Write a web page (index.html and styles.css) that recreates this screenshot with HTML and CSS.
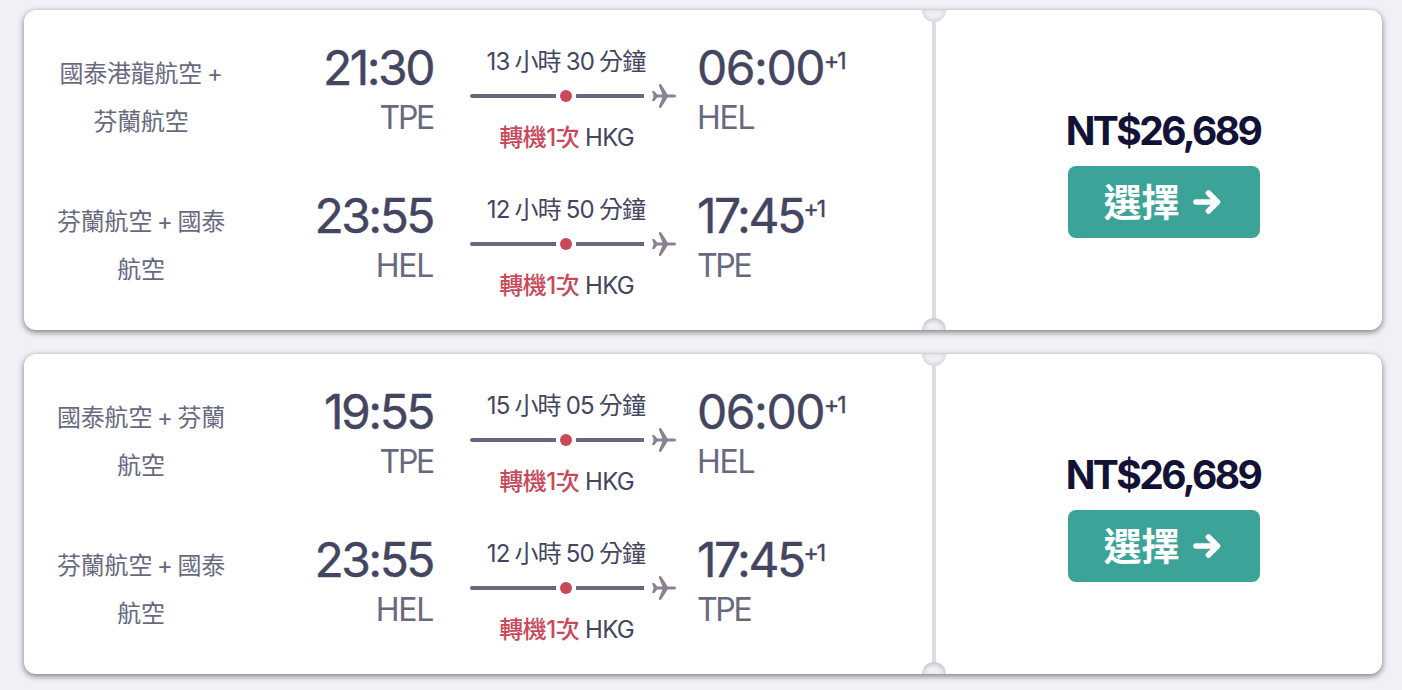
FILE: index.html
```html
<!DOCTYPE html>
<html lang="zh-Hant">
<head>
    <meta charset="UTF-8">
    <meta name="viewport" content="width=device-width, initial-scale=1.0">
    <title>航班搜尋結果</title>
    <link rel="stylesheet" href="styles.css">
</head>
<body>
    <svg class="sprite" width="0" height="0">
        <symbol id="plane" viewBox="0 0 24 24">
            <path d="M0 7H1.6Q2.3 7 2.8 7.6L5.2 10.5H10.4L6.9 1.7Q6.3 0 8 0Q8.9 0 9.4 0.8L15.6 10.5H22.5Q24 10.5 24 12T22.5 13.5H15.6L9.4 23.2Q8.9 24 8 24Q6.3 24 6.9 22.3L10.4 13.5H5.2L2.8 16.4Q2.3 17 1.6 17H0L1.6 12Z"/>
        </symbol>
        <symbol id="arrow" viewBox="0 0 28 26">
            <path d="M3 13H24M15.5 4L24.5 13L15.5 22" fill="none" stroke="#fff" stroke-width="5.6" stroke-linecap="round" stroke-linejoin="round"/>
        </symbol>
    </svg>

    <div class="ticket">
        <div class="legs">
            <div class="leg">
                <div class="airline">國泰港龍航空 +<br>芬蘭航空</div>
                <div class="depart">
                    <div class="time">21:30</div>
                    <div class="code tpe">TPE</div>
                </div>
                <div class="route">
                    <div class="duration">13 小時 30 分鐘</div>
                    <div class="track"><span class="line"></span><span class="dot"></span><span class="line end"></span><svg class="plane"><use href="#plane"/></svg></div>
                    <div class="stops"><span class="red">轉機1次</span> HKG</div>
                </div>
                <div class="arrive">
                    <div class="time wide">06:00<sup>+1</sup></div>
                    <div class="code">HEL</div>
                </div>
            </div>
            <div class="leg">
                <div class="airline">芬蘭航空 + 國泰<br>航空</div>
                <div class="depart">
                    <div class="time">23:55</div>
                    <div class="code">HEL</div>
                </div>
                <div class="route">
                    <div class="duration">12 小時 50 分鐘</div>
                    <div class="track"><span class="line"></span><span class="dot"></span><span class="line end"></span><svg class="plane"><use href="#plane"/></svg></div>
                    <div class="stops"><span class="red">轉機1次</span> HKG</div>
                </div>
                <div class="arrive">
                    <div class="time">17:45<sup>+1</sup></div>
                    <div class="code tpe">TPE</div>
                </div>
            </div>
        </div>
        <div class="divider"></div>
        <div class="buy">
            <div class="price">NT$26,689</div>
            <button class="select"><span>選擇</span><svg class="arrow"><use href="#arrow"/></svg></button>
        </div>
    </div>

    <div class="ticket">
        <div class="legs">
            <div class="leg">
                <div class="airline">國泰航空 + 芬蘭<br>航空</div>
                <div class="depart">
                    <div class="time">19:55</div>
                    <div class="code tpe">TPE</div>
                </div>
                <div class="route">
                    <div class="duration">15 小時 05 分鐘</div>
                    <div class="track"><span class="line"></span><span class="dot"></span><span class="line end"></span><svg class="plane"><use href="#plane"/></svg></div>
                    <div class="stops"><span class="red">轉機1次</span> HKG</div>
                </div>
                <div class="arrive">
                    <div class="time wide">06:00<sup>+1</sup></div>
                    <div class="code">HEL</div>
                </div>
            </div>
            <div class="leg">
                <div class="airline">芬蘭航空 + 國泰<br>航空</div>
                <div class="depart">
                    <div class="time">23:55</div>
                    <div class="code">HEL</div>
                </div>
                <div class="route">
                    <div class="duration">12 小時 50 分鐘</div>
                    <div class="track"><span class="line"></span><span class="dot"></span><span class="line end"></span><svg class="plane"><use href="#plane"/></svg></div>
                    <div class="stops"><span class="red">轉機1次</span> HKG</div>
                </div>
                <div class="arrive">
                    <div class="time">17:45<sup>+1</sup></div>
                    <div class="code tpe">TPE</div>
                </div>
            </div>
        </div>
        <div class="divider"></div>
        <div class="buy">
            <div class="price">NT$26,689</div>
            <button class="select"><span>選擇</span><svg class="arrow"><use href="#arrow"/></svg></button>
        </div>
    </div>
</body>
</html>
```
FILE: styles.css
```css
* {
    box-sizing: border-box;
}
body {
    margin: 0;
    height: 690px;
    overflow: hidden;
    padding: 10px 20px 0 24px;
    display: flex;
    flex-direction: column;
    gap: 24px;
    background-color: #f0f1f7;
    color: #444560;
    font-family: Inter, "Noto Sans CJK TC", sans-serif;
}
.sprite {
    position: absolute;
}
.ticket {
    display: flex;
    flex-shrink: 0;
    height: 320px;
    border-radius: 12px;
    background-color: #fff;
    box-shadow: 0 2px 6px rgba(0, 0, 0, 0.5);
}
.legs {
    width: 908px;
    padding: 12px 0;
}
.leg {
    display: grid;
    grid-template-columns: 202px 193px 241px 200px;
    height: 148px;
    padding-left: 16px;
}
.airline {
    padding-top: 28px;
    text-align: center;
    font-size: 24px;
    line-height: 48px;
    letter-spacing: -0.2px;
    word-spacing: -1.8px;
    color: #68697f;
}
.depart {
    padding: 18px 2px 0 0;
    text-align: right;
}
.arrive {
    padding: 18px 0 0 21px;
}
.time {
    font-size: 48px;
    line-height: 56px;
    font-weight: 400;
    letter-spacing: -2.5px;
    white-space: nowrap;
    -webkit-text-stroke: 0.4px currentColor;
}
.time.wide {
    letter-spacing: -1.5px;
}
.time sup {
    font-size: 23px;
    line-height: 0;
    letter-spacing: -2px;
    vertical-align: 16px;
}
.code {
    font-size: 32px;
    line-height: 44px;
    letter-spacing: -1.3px;
    color: #68697f;
}
.code.tpe {
    letter-spacing: -2.3px;
}
.route {
    margin-left: 35px;
    width: 206px;
    padding-top: 22px;
}
.duration, .stops {
    width: 192px;
    font-size: 24px;
    line-height: 36px;
    text-align: center;
    letter-spacing: -0.8px;
    white-space: nowrap;
}
.duration {
    word-spacing: -1px;
}
.track {
    display: flex;
    align-items: center;
    height: 32px;
}
.line {
    width: 86px;
    height: 4px;
    border-radius: 2px 0 0 2px;
    background-color: #68697f;
}
.line.end {
    width: 68px;
    border-radius: 0;
}
.dot {
    width: 12px;
    height: 12px;
    margin: 0 4px;
    border-radius: 50%;
    background-color: #c84a5a;
}
.plane {
    width: 24px;
    height: 24px;
    margin-left: 8px;
    fill: #898294;
}
.stops {
    margin-top: 8px;
    padding-left: 1px;
}
.red {
    color: #c84a5a;
    font-weight: 500;
    letter-spacing: -0.5px;
}
.divider {
    position: relative;
    width: 4px;
    background-color: #dddde5;
}
/* half circles cut out of the ticket edges */
.divider::before, .divider::after {
    content: "";
    position: absolute;
    left: -10px;
    width: 24px;
    height: 12px;
    background-color: #f0f1f7;
}
.divider::before {
    top: 0;
    border-radius: 0 0 12px 12px;
    box-shadow: inset 0 -1px 5px rgba(0, 0, 0, 0.16);
}
.divider::after {
    bottom: 0;
    border-radius: 12px 12px 0 0;
    box-shadow: inset 0 2px 5px rgba(0, 0, 0, 0.22);
}
.buy {
    flex: 1;
    display: flex;
    flex-direction: column;
    align-items: center;
    padding: 96px 0 0 10px;
}
.price {
    padding-right: 2px;
    font-size: 39px;
    line-height: 50px;
    height: 48px;
    font-weight: 700;
    letter-spacing: -2.6px;
    color: #111236;
}
.select {
    display: flex;
    align-items: center;
    justify-content: center;
    gap: 13px;
    width: 192px;
    height: 72px;
    margin-top: 12px;
    padding: 0 4px 0 0;
    border: none;
    border-radius: 8px;
    background-color: #3ca398;
    color: #fff;
    font-family: Inter, "Noto Sans CJK TC", sans-serif;
    font-size: 38px;
    font-weight: 700;
}
.select span {
    padding-bottom: 6px;
}
.arrow {
    width: 28px;
    height: 26px;
}
```
